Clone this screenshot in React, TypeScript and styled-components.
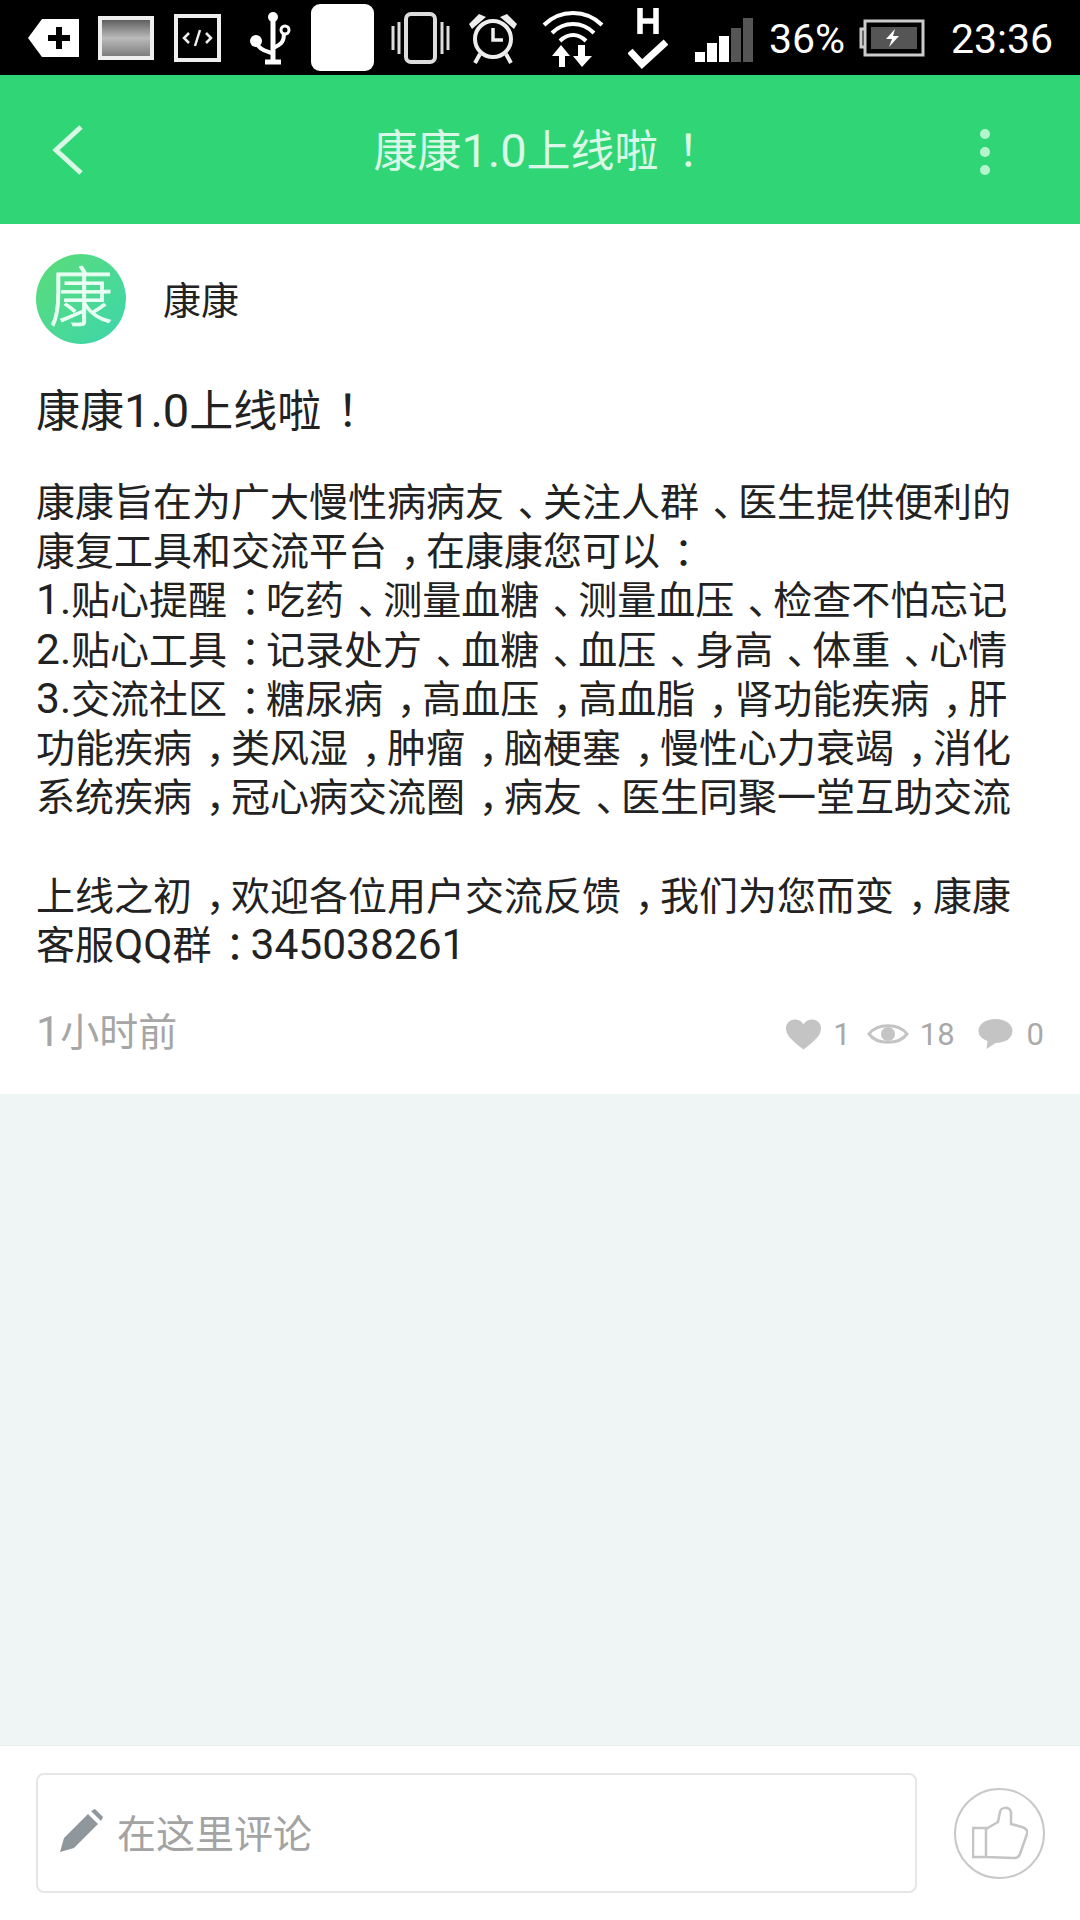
import React from 'react';
import styled, { createGlobalStyle } from 'styled-components';

const GlobalStyle = createGlobalStyle`
  html, body {
    margin: 0;
    padding: 0;
    background: #fff;
  }
  * {
    box-sizing: border-box;
  }
`;

const Page = styled.div`
  width: 1080px;
  height: 1920px;
  display: flex;
  flex-direction: column;
  font-family: "Roboto", "Noto Sans CJK SC", sans-serif;
  background: #eff4f5;
  overflow: hidden;
`;

const StatusBar = styled.div`
  height: 75px;
  flex: none;
  background: #000;
  display: flex;
  align-items: center;
  padding-left: 28px;
  color: #fff;
`;

const StatusIcon = styled.svg<{ $gap?: number; $top?: number }>`
  flex: none;
  display: block;
  margin-left: ${props => props.$gap ?? 0}px;
  margin-top: ${props => props.$top ?? 0}px;
`;

const WhiteBlock = styled.div`
  width: 63px;
  height: 67px;
  flex: none;
  margin-left: 20px;
  background: #fff;
  border-radius: 9px;
`;

const StatusText = styled.span<{ $gap: number; $width: number }>`
  flex: none;
  width: ${props => props.$width}px;
  font-size: 41px;
  font-family: "Roboto", sans-serif;
  margin-left: ${props => props.$gap}px;
  margin-top: 4px;
  line-height: 1;
  white-space: nowrap;
`;

const Header = styled.header`
  height: 149px;
  flex: none;
  background: #30d576;
  display: flex;
  align-items: center;
  justify-content: space-between;
  padding: 0 87px 0 50px;
  position: relative;
`;

const HeaderTitle = styled.h1`
  position: absolute;
  left: 0;
  right: 0;
  margin: 0;
  padding: 0 4px 3px 0;
  text-align: center;
  font-size: 44px;
  font-weight: 400;
  color: #d9f8e5;
`;

const MoreDots = styled.svg`
  margin-top: 6px;
`;

const Post = styled.section`
  height: 870px;
  flex: none;
  background: #fff;
  padding: 30px 36px 0;
`;

const Author = styled.div`
  display: flex;
  align-items: center;
  gap: 37px;
`;

const Avatar = styled.div`
  width: 90px;
  height: 90px;
  border-radius: 50%;
  background: linear-gradient(135deg, #5cdc78, #3cd6ac);
  color: #eafff4;
  font-size: 64px;
  font-weight: 300;
  -webkit-text-stroke: 0.8px #eafff4;
  line-height: 90px;
  text-align: center;
`;

const AuthorName = styled.span`
  font-size: 38px;
  color: #222;
  margin-bottom: 3px;
`;

const PostTitle = styled.h2`
  margin: 38px 0 0;
  font-size: 44px;
  line-height: 60px;
  font-weight: 400;
  color: #222;
`;

const PostBody = styled.p`
  margin: 37px 0 0;
  font-size: 39px;
  line-height: 49.2px;
  color: #222;
  white-space: pre;
`;

const Latin = styled.span<{ $size: number }>`
  font-size: ${props => props.$size}px;
  line-height: 1;
`;

// centred in its cell, as the phone's fallback font draws CJK punctuation
const Punct = styled.span`
  display: inline-block;
  width: 1em;
  padding-left: 0.35em;
  font-feature-settings: "halt";
  line-height: 1;
`;

const PostFooter = styled.div`
  display: flex;
  align-items: center;
  justify-content: space-between;
  margin-top: 30px;
  color: #a6a6a6;
`;

const TimeAgo = styled.span`
  font-size: 39px;
`;

const Stats = styled.div`
  display: flex;
  align-items: center;
  margin-top: 10px;
`;

const StatIcon = styled.svg`
  flex: none;
  display: block;
`;

const StatCount = styled.span<{ $lead: number; $gap: number }>`
  font-size: 31px;
  margin-left: ${props => props.$lead}px;
  margin-right: ${props => props.$gap}px;
  color: #a9a9a9;
`;

const Spacer = styled.div`
  flex: 1;
`;

const CommentBar = styled.footer`
  height: 175px;
  flex: none;
  background: #fff;
  border-top: 1px solid #e8ecec;
  display: flex;
  align-items: center;
  padding: 0 35px 0 36px;
  justify-content: space-between;
`;

const CommentInput = styled.div`
  width: 881px;
  height: 120px;
  border: 2px solid #e6e6e6;
  border-radius: 8px;
  display: flex;
  align-items: center;
  gap: 14px;
  padding: 0 0 4px 21px;
  background: #fff;
`;

const Placeholder = styled.span`
  font-size: 39px;
  color: #a3a3a3;
`;

const LikeButton = styled.div`
  width: 91px;
  height: 91px;
  border: 2px solid #c9c9c9;
  border-radius: 50%;
  display: flex;
  align-items: center;
  justify-content: center;
`;

const bodyLines = `康康旨在为广大慢性病病友、关注人群、医生提供便利的
康复工具和交流平台，在康康您可以：
1.贴心提醒：吃药、测量血糖、测量血压、检查不怕忘记
2.贴心工具：记录处方、血糖、血压、身高、体重、心情
3.交流社区：糖尿病，高血压，高血脂，肾功能疾病，肝
功能疾病，类风湿，肿瘤，脑梗塞，慢性心力衰竭，消化
系统疾病，冠心病交流圈，病友、医生同聚一堂互助交流

上线之初，欢迎各位用户交流反馈，我们为您而变，康康
客服QQ群：345038261`;

// latin runs are set larger than the CJK text, punctuation gets its own cell
const renderText = (text: string, latinSize: number) =>
  text.split(/([，、：！]|[0-9A-Za-z.]+)/).map((part, i) => {
    if (/^[，、：！]$/.test(part)) return <Punct key={i}>{part}</Punct>;
    if (/^[0-9A-Za-z.]+$/.test(part)) return <Latin key={i} $size={latinSize}>{part}</Latin>;
    return part;
  });

const App: React.FC = () => (
  <Page lang="zh-Hans">
    <GlobalStyle />
    <StatusBar>
      <StatusIcon width="51" height="40" viewBox="0 0 51 40">
        <path d="M0 20 L14 1 H51 V39 H14 Z" fill="#fff" />
        <path d="M28 9 h6 v8 h8 v6 h-8 v8 h-6 v-8 h-8 v-6 h8 Z" fill="#000" />
      </StatusIcon>
      <StatusIcon width="56" height="44" viewBox="0 0 56 44" $gap={19}>
        <defs>
          <linearGradient id="pic" x1="0" y1="0" x2="0" y2="1">
            <stop offset="0" stopColor="#555" />
            <stop offset="0.5" stopColor="#bbb" />
            <stop offset="1" stopColor="#777" />
          </linearGradient>
        </defs>
        <rect x="2" y="2" width="52" height="40" fill="url(#pic)" stroke="#eee" strokeWidth="4" />
      </StatusIcon>
      <StatusIcon width="47" height="48" viewBox="0 0 47 48" $gap={20}>
        <rect x="2" y="2" width="43" height="44" fill="none" stroke="#eee" strokeWidth="4" />
        <path d="M15 19 L10 24 L15 29 M32 19 L37 24 L32 29 M26 16 L21 32" fill="none" stroke="#eee" strokeWidth="2.5" />
      </StatusIcon>
      <StatusIcon width="41" height="56" viewBox="0 0 41 56" $gap={29}>
        <circle cx="23" cy="7" r="5" fill="#fff" />
        <path d="M23 8 V52 M15 52 H31" stroke="#fff" strokeWidth="5" fill="none" />
        <circle cx="6" cy="31" r="6" fill="#fff" />
        <path d="M7 33 C9 42 23 42 23 44 M23 38 C33 34 34 30 34 23" stroke="#fff" strokeWidth="4" fill="none" />
        <circle cx="35" cy="20" r="4" fill="none" stroke="#fff" strokeWidth="3" />
      </StatusIcon>
      <WhiteBlock />
      <StatusIcon width="59" height="52" viewBox="0 0 59 52" $gap={17}>
        <rect x="15" y="2" width="29" height="48" rx="5" fill="none" stroke="#ddd" strokeWidth="4" />
        <path d="M2 14 V38 M8 10 V42 M51 10 V42 M57 14 V38" stroke="#ddd" strokeWidth="3" />
      </StatusIcon>
      <StatusIcon width="52" height="54" viewBox="0 0 52 54" $gap={17}>
        <circle cx="26" cy="28" r="18" fill="none" stroke="#eee" strokeWidth="4" />
        <path d="M26 17 V29 H36" fill="none" stroke="#eee" strokeWidth="3.5" />
        <path d="M2 13 L12 3 L19 6 L5 18 Z M50 13 L40 3 L33 6 L47 18 Z" fill="#eee" />
        <path d="M13 43 L8 52 M39 43 L44 52" stroke="#eee" strokeWidth="4" />
      </StatusIcon>
      <StatusIcon width="62" height="62" viewBox="0 0 62 62" $gap={23}>
        <path d="M2 18 C18 2 44 2 60 18 M10 26 C22 14 40 14 52 26 M18 34 C26 26 36 26 44 34" fill="none" stroke="#fff" strokeWidth="4" />
        <path d="M17 60 V49 H10 L19 38 L28 49 H23 V60 Z M36 38 H43 V49 H50 L40 60 L31 49 H36 Z" fill="#fff" />
      </StatusIcon>
      <StatusIcon width="40" height="62" viewBox="0 0 40 62" $gap={24}>
        <path d="M12 1 V27 M28 1 V27 M12 14 H28" stroke="#fff" strokeWidth="5.5" fill="none" />
        <path d="M2 44 L14 57 L38 35" stroke="#fff" strokeWidth="7" fill="none" />
      </StatusIcon>
      <StatusIcon width="58" height="44" viewBox="0 0 58 44" $gap={27} $top={5}>
        <rect x="0" y="34" width="10" height="10" fill="#fff" />
        <rect x="12" y="25" width="10" height="19" fill="#fff" />
        <rect x="24" y="18" width="10" height="26" fill="#fff" />
        <rect x="36" y="10" width="10" height="34" fill="#555" />
        <rect x="48" y="0" width="10" height="44" fill="#555" />
      </StatusIcon>
      <StatusText $gap={16} $width={77}>36%</StatusText>
      <StatusIcon width="68" height="38" viewBox="0 0 68 38" $gap={11}>
        <path d="M8 10 H4 V28 H8" fill="none" stroke="#ccc" strokeWidth="3" />
        <rect x="8" y="2" width="58" height="34" fill="none" stroke="#ccc" strokeWidth="3" />
        <rect x="14" y="8" width="46" height="22" fill="#555" />
        <path d="M38 10 L29 20 H35 L32 28 L42 17 H36 Z" fill="#fff" />
      </StatusIcon>
      <StatusText $gap={26} $width={104}>23:36</StatusText>
    </StatusBar>
    <Header>
      <svg width="34" height="52" viewBox="0 0 34 52">
        <path d="M31 3 L6 26 L31 49" fill="none" stroke="#d9f8e5" strokeWidth="5" />
      </svg>
      <HeaderTitle>{renderText('康康1.0上线啦！', 47)}</HeaderTitle>
      <MoreDots width="16" height="56" viewBox="0 0 16 56">
        <circle cx="8" cy="9" r="5" fill="#b5f5cd" />
        <circle cx="8" cy="27" r="5" fill="#b5f5cd" />
        <circle cx="8" cy="45" r="5" fill="#b5f5cd" />
      </MoreDots>
    </Header>
    <Post>
      <Author>
        <Avatar>康</Avatar>
        <AuthorName>康康</AuthorName>
      </Author>
      <PostTitle>{renderText('康康1.0上线啦！', 47)}</PostTitle>
      <PostBody>{renderText(bodyLines, 42.5)}</PostBody>
      <PostFooter>
        <TimeAgo>{renderText('1小时前', 43)}</TimeAgo>
        <Stats>
          <StatIcon width="37" height="32" viewBox="0 0 38 32">
            <path d="M19 32 C8 23 1 18 1 10 C1 4 6 1 10 1 C14 1 17 3 19 6 C21 3 24 1 28 1 C32 1 37 4 37 10 C37 18 30 23 19 32 Z" fill="#c4c4c4" />
          </StatIcon>
          <StatCount $lead={11} $gap={16}>1</StatCount>
          <StatIcon width="42" height="28" viewBox="0 0 42 28">
            <path d="M2 14 C10 3 32 3 40 14 C32 25 10 25 2 14 Z" fill="none" stroke="#c4c4c4" strokeWidth="3" />
            <circle cx="21" cy="14" r="7" fill="#c4c4c4" />
          </StatIcon>
          <StatCount $lead={11} $gap={23}>18</StatCount>
          <StatIcon width="35" height="32" viewBox="0 0 34 32">
            <path d="M17 1 C27 1 34 6 34 13 C34 20 27 25 17 25 L8 31 L9 23 C4 21 0 18 0 13 C0 6 7 1 17 1 Z" fill="#c4c4c4" />
          </StatIcon>
          <StatCount $lead={14} $gap={0}>0</StatCount>
        </Stats>
      </PostFooter>
    </Post>
    <Spacer />
    <CommentBar>
      <CommentInput>
        <svg width="44" height="44" viewBox="0 0 44 44">
          <path d="M1 43 L5 29 L29 5 L39 15 L15 39 Z M32 2 L36 0 L44 8 L42 12 Z" fill="#8f979c" />
        </svg>
        <Placeholder>在这里评论</Placeholder>
      </CommentInput>
      <LikeButton>
        <svg width="56" height="54" viewBox="0 0 56 54">
          <path d="M1 22 H14 V51 H1 Z M14 23 L26 16 L28 6 C29 1 37 0 39 6 L39 18 L50 21 C54 22 56 25 55 28 L48 48 C47 51 45 52 42 52 L14 51" fill="none" stroke="#c4c4c4" strokeWidth="2.5" />
        </svg>
      </LikeButton>
    </CommentBar>
  </Page>
);

export default App;
